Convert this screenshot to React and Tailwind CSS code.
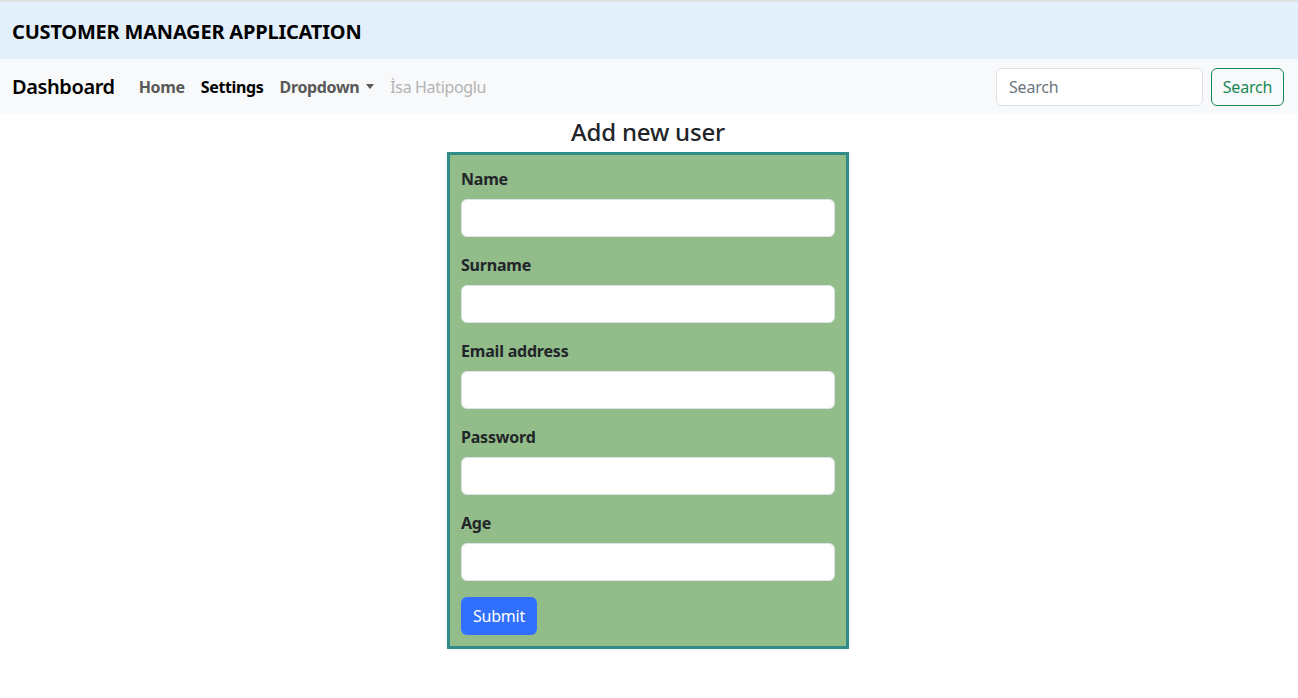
import React from "react";

const font = { fontFamily: '"Segoe UI", "Noto Sans", "Open Sans", sans-serif' };

function Field({ label, type = "text" }) {
  return (
    <div className="mb-4">
      <label className="block mb-2 text-[16px] leading-6 font-bold text-[#212529]">{label}</label>
      <input type={type} className="block w-full h-[38px] rounded-[6px] border border-[#dee2e6] bg-white px-3 outline-none" />
    </div>
  );
}

export default function App() {
  return (
    <div className="min-h-[698px] bg-white text-[#212529] tracking-[-0.2px]" style={font}>
      <div className="border-t-[2px] border-[#dfe1e3] bg-[#e3f0fc] h-[59px] flex items-center px-3 pt-[2px]">
        <h1 className="text-[20px] font-bold leading-6 text-black">CUSTOMER MANAGER APPLICATION</h1>
      </div>
      <nav className="bg-[#f8f9fa] h-[55px] flex items-center pl-3 pr-[14px]">
        <span className="text-[20px] font-semibold text-black mr-6 tracking-[-0.4px]">Dashboard</span>
        <div className="flex items-center gap-4 text-[16px] font-bold tracking-[-0.35px]">
          <span className="text-[#595959]">Home</span>
          <span className="text-black">Settings</span>
          <span className="text-[#595959] flex items-center">
            Dropdown
            <span className="ml-[7px] inline-block w-0 h-0 border-l-[4px] border-r-[4px] border-t-[5px] border-l-transparent border-r-transparent border-t-[#595959]" />
          </span>
          <span className="font-normal text-[#b3b3b3]">İsa Hatipoglu</span>
        </div>
        <div className="ml-auto flex items-center gap-2">
          <input placeholder="Search" className="w-[207px] h-[38px] rounded-[6px] border border-[#dee2e6] bg-white px-3 text-[16px] placeholder-[#6c757d] outline-none" />
          <button className="h-[38px] w-[73px] rounded-[6px] border border-[#198754] text-[#198754] text-[16px]">Search</button>
        </div>
      </nav>
      <div className="flex flex-col items-center pr-[2px]">
        <h2 className="text-[24px] leading-[34px] font-medium mt-[1px] mb-[3px]">Add new user</h2>
        <form className="w-[402px] border-[3px] border-[#2f8c88] bg-[#93bc8b] p-[11px] pt-3" onSubmit={(e) => e.preventDefault()}>
          <Field label="Name" />
          <Field label="Surname" />
          <Field label="Email address" type="email" />
          <Field label="Password" type="password" />
          <Field label="Age" />
          <button type="submit" className="h-[38px] w-[76px] rounded-[6px] bg-[#316ffd] text-white text-[16px]">Submit</button>
        </form>
      </div>
    </div>
  );
}
